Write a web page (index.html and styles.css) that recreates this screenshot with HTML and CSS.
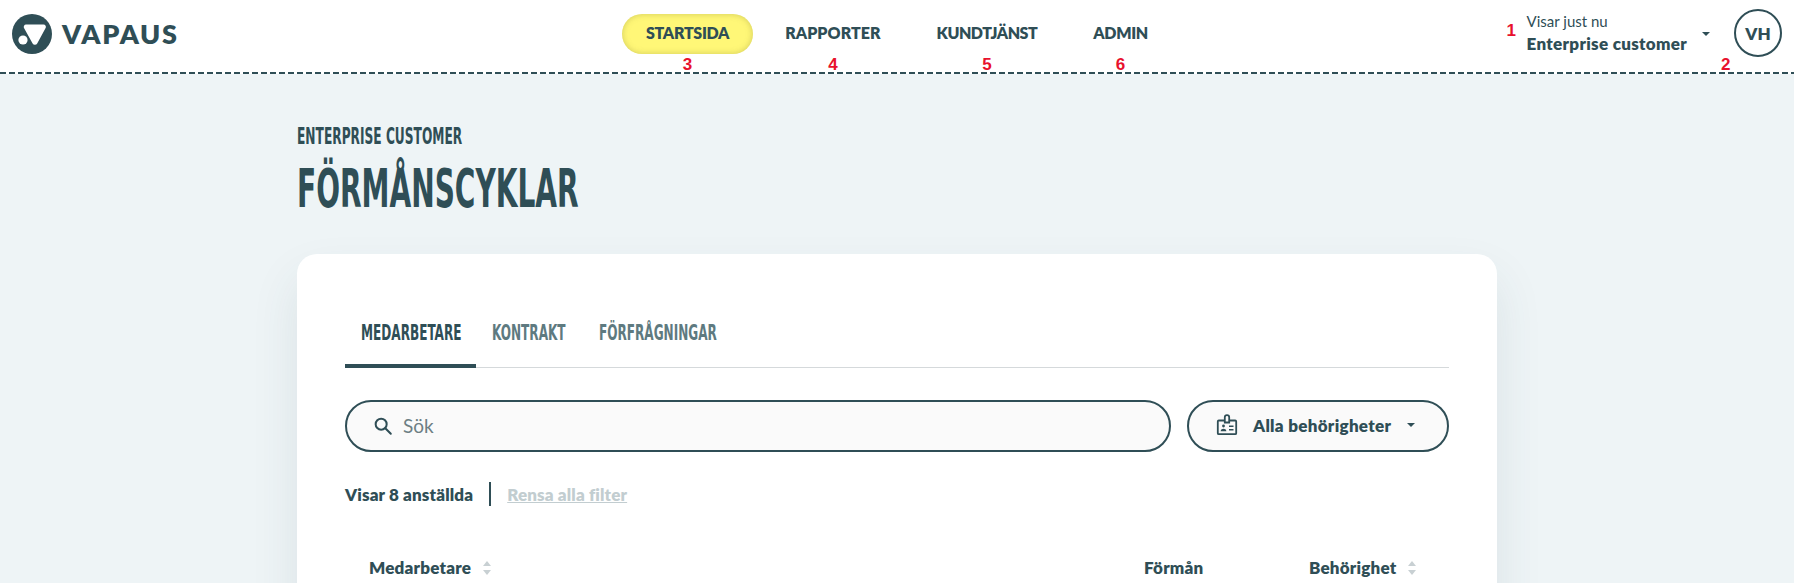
FILE: index.html
```html
<!DOCTYPE html>
<html lang="sv">
<head>
<meta charset="utf-8">
<title>Förmånscyklar</title>
<link rel="stylesheet" href="styles.css">
</head>
<body>
<header class="topbar">
  <a class="brand">
    <svg class="brand-mark" viewBox="0 0 40 40" aria-hidden="true">
      <circle cx="20" cy="20" r="20" fill="#2f4e56"/>
      <path d="M14 10.5h17.5a2.4 2.4 0 0 1 2.100 3.600L25.200 29.500a2.600 2.600 0 0 1-4.600-.1l-8.600-15.400a2.400 2.400 0 0 1 2-3.500z" fill="#fff"/>
      <circle cx="11" cy="26" r="4.600" fill="#fff"/>
    </svg>
    <span class="brand-name">VAPAUS</span>
  </a>
  <nav class="mainnav">
    <a class="navitem active">STARTSIDA<span class="marker">3</span></a>
    <a class="navitem nav-wide">RAPPORTER<span class="marker">4</span></a>
    <a class="navitem nav-tight">KUNDTJÄNST<span class="marker">5</span></a>
    <a class="navitem">ADMIN<span class="marker">6</span></a>
  </nav>
  <div class="account">
    <div class="viewing">
      <span class="marker marker-side">1</span>
      <span class="viewing-label">Visar just nu</span>
      <strong class="viewing-name">Enterprise customer</strong>
    </div>
    <span class="caret caret-account"></span>
    <div class="avatar">VH<span class="marker marker-avatar">2</span></div>
  </div>
</header>
<main class="page">
  <p class="eyebrow"><span class="squeeze">ENTERPRISE CUSTOMER</span></p>
  <h1 class="title"><span class="squeeze">FÖRMÅNSCYKLAR</span></h1>
  <section class="card">
    <div class="tabs">
      <a class="tab active"><span class="squeeze">MEDARBETARE</span></a>
      <a class="tab"><span class="squeeze">KONTRAKT</span></a>
      <a class="tab"><span class="squeeze">FÖRFRÅGNINGAR</span></a>
    </div>
    <div class="filters">
      <label class="search">
        <svg class="search-icon" viewBox="0 0 24 24" aria-hidden="true" fill="none" stroke="#2f4e56" stroke-width="2.2"><circle cx="10" cy="10" r="6"/><path d="M14.500 14.500 20.500 20.500" stroke-linecap="round"/></svg>
        <span class="search-text">Sök</span>
      </label>
      <button class="select">
        <svg class="badge-icon" viewBox="0 0 24 24" aria-hidden="true" fill="none" stroke="#2f4e56" stroke-width="1.8"><path d="M9.500 7.500H3.800a1 1 0 0 0-1 1v11.700a1 1 0 0 0 1 1h16.400a1 1 0 0 0 1-1V8.500a1 1 0 0 0-1-1h-5.700"/><path d="M9.800 9.500V4.300a2.200 2.200 0 0 1 4.400 0v5.200z"/><circle cx="8.500" cy="13" r="1.400" fill="#2f4e56" stroke="none"/><path d="M5.600 18.200c.3-1.800 1.500-2.500 2.900-2.500s2.600.7 2.900 2.500z" fill="#2f4e56" stroke="none"/><path d="M14 13.300h4.500M14 16.800h4.500" stroke-width="1.500"/></svg>
        <span class="select-text">Alla behörigheter</span>
        <span class="caret"></span>
      </button>
    </div>
    <div class="summary">
      <strong class="count">Visar 8 anställda</strong>
      <span class="divider"></span>
      <a class="clear">Rensa alla filter</a>
    </div>
    <div class="table-head">
      <span class="col col-name">Medarbetare<span class="sort"></span></span>
      <span class="col col-benefit">Förmån</span>
      <span class="col col-role">Behörighet<span class="sort"></span></span>
    </div>
  </section>
</main>
</body>
</html>
```
FILE: styles.css
```css
* { box-sizing: border-box; }
html, body { margin: 0; height: 583px; overflow: hidden; }
body { background: #eef4f6; color: #2f4e56; font-family: "Lato", "Liberation Sans", sans-serif; }
a { color: inherit; text-decoration: none; }

.topbar {
  height: 74px;
  padding: 0 12px 6px;
  display: grid;
  grid-template-columns: 1fr auto 1fr;
  align-items: center;
  background: #fff linear-gradient(90deg, #2f4e56 6px, transparent 6px) left bottom / 9px 2px repeat-x;
}
.brand { display: flex; align-items: center; gap: 10px; }
.brand-mark { width: 40px; height: 40px; display: block; }
.brand-name { font-size: 27px; font-weight: 800; letter-spacing: 1.7px; line-height: 1; margin-bottom: 1px; }

.mainnav { display: flex; gap: 8px; }
.navitem { position: relative; height: 40px; padding: 0 24px 4px; border-radius: 20px; display: flex; align-items: center; font-size: 16px; font-weight: 800; letter-spacing: -.3px; }
.navitem.active { background: #fff777; box-shadow: inset 0 0 6px rgba(120,120,40,.35); }
.nav-wide { letter-spacing: .05px; }
.nav-tight { letter-spacing: -.5px; }
.marker { position: absolute; left: 50%; top: 41px; transform: translateX(-50%); color: #e8112d; font: 700 17px/20px "Liberation Sans", sans-serif; letter-spacing: 0; }

.account { justify-self: end; display: flex; align-items: center; }
.viewing { position: relative; display: flex; flex-direction: column; margin: 0 15px 2px 0; }
.marker-side { left: -20px; top: 11px; transform: none; }
.viewing-label { font-size: 15px; line-height: 22px; }
.viewing-name { font-size: 17px; font-weight: 800; line-height: 24px; letter-spacing: .3px; }
.caret { display: inline-block; width: 0; height: 0; border: 4.5px solid transparent; border-top-color: #2f4e56; border-bottom: 0; }
.caret-account { margin-right: 24px; }
.avatar { position: relative; width: 48px; height: 48px; margin-bottom: 2px; border: 2px solid #2f4e56; border-radius: 50%; display: flex; align-items: center; justify-content: center; font-size: 17px; font-weight: 800; }
.marker-avatar { left: -15px; top: 44px; transform: none; }

.page { width: 1200px; margin: 0 auto; }
.eyebrow, .title, .tab { font-family: "DejaVu Sans Condensed", "DejaVu Sans", sans-serif; font-weight: 700; white-space: nowrap; }
.squeeze { display: inline-block; transform-origin: left center; }
.eyebrow { margin: 0; padding-top: 49px; font-size: 23px; line-height: 26px; height: 75px; }
.eyebrow .squeeze { transform: scaleX(.59); }
.title { margin: 10px 0 0; font-size: 53px; line-height: 60px; }
.title .squeeze { transform: scaleX(.588); }

.card { margin-top: 35px; height: 500px; background: #fff; border-radius: 20px; padding: 48px; box-shadow: 0 24px 48px rgba(47,78,86,.1); }
.tabs { display: flex; border-bottom: 1px solid #d5d9db; height: 66px; }
.tab { height: 66px; padding: 18px 16px 0; font-size: 22px; line-height: 26px; color: #5e7a80; width: 107px; }
.tab .squeeze { transform: scaleX(.61); }
.tab.active { width: 131px; color: #2f4e56; border-bottom: 4px solid #2f4e56; }

.filters { display: flex; gap: 16px; margin-top: 32px; }
.search, .select { height: 52px; border: 2px solid #2f4e56; border-radius: 26px; background: #fafafa; display: flex; align-items: center; color: #2f4e56; font-family: inherit; }
.search { flex: 1; padding-left: 25px; }
.search-icon { width: 22px; height: 22px; margin-right: 9px; }
.search-text { font-size: 19px; color: #6d7f84; padding-bottom: 1px; }
.select { width: 262px; padding: 0 0 2px 26px; }
.badge-icon { width: 24px; height: 24px; margin-right: 14px; }
.select-text { font-size: 17px; font-weight: 800; letter-spacing: .3px; margin-right: 16px; }

.summary { display: flex; align-items: center; margin-top: 30px; height: 24px; font-size: 17px; letter-spacing: .15px; }
.count { font-weight: 800; }
.divider { width: 2px; height: 24px; background: #2f4e56; margin: 0 16px; }
.clear { font-weight: 800; color: #c2cdd0; text-decoration: underline; }

.table-head { display: grid; grid-template-columns: 775px 165px 1fr; margin-top: 51px; padding-left: 24px; font-size: 17px; font-weight: 800; letter-spacing: .2px; }
.col { display: flex; align-items: center; }
.sort { position: relative; width: 8px; height: 12px; margin-left: 12px; }
.sort::before, .sort::after { content: ""; position: absolute; left: 0; border: 4px solid transparent; }
.sort::before { top: -1px; border-top: 0; border-bottom: 5px solid #c8d0d3; }
.sort::after { bottom: -1px; border-bottom: 0; border-top: 5px solid #c8d0d3; }
```
